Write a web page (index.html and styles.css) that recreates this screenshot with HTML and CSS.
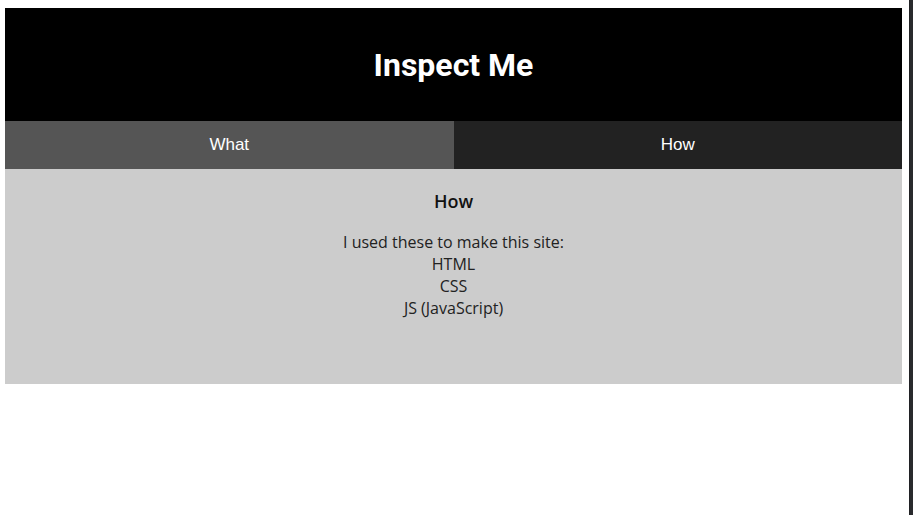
FILE: index.html
```html
<!DOCTYPE html>
<html>
<head>
    <title>Inspect Me</title>
    <link rel="stylesheet" href="styles.css">
</head>
<body>
    <header class="site-header">
        <h1>Inspect Me</h1>
    </header>

    <nav class="tabs">
        <button class="tab tab-what">What</button>
        <button class="tab tab-how">How</button>
    </nav>

    <section class="panel">
        <h2>How</h2>
        <p>
            I used these to make this site:<br>
            HTML<br>
            CSS<br>
            JS (JavaScript)
        </p>
    </section>

    <div class="devtools-edge"></div>
</body>
</html>
```

FILE: styles.css
```css
body {
    margin: 8px 11px 0 5px;
    font-family: "Open Sans", Arial, sans-serif;
    background: #fff;
}
.site-header {
    height: 113px;
    background: #000;
    display: flex;
    align-items: center;
    justify-content: center;
}
.site-header h1 {
    margin: 0;
    font-family: Roboto, Arial, sans-serif;
    font-weight: 700;
    font-size: 32px;
    color: #fff;
}
.tabs {
    display: flex;
}
.tab {
    flex: 1;
    height: 48px;
    border: none;
    padding: 0;
    color: #fff;
    font-family: "Liberation Sans", Arial, sans-serif;
    font-size: 17px;
    cursor: pointer;
}
.tab-what {
    background: #555;
}
.tab-how {
    background: #222;
}
.panel {
    background: #ccc;
    height: 215px;
    box-sizing: border-box;
    padding-top: 20px;
    text-align: center;
    color: #222;
}
.panel h2 {
    margin: 0 0 17px;
    font-size: 18px;
    font-weight: 600;
    line-height: 25px;
    color: #111;
}
.panel p {
    margin: 0;
    font-size: 16px;
    line-height: 22px;
}
.devtools-edge {
    position: fixed;
    top: 0;
    right: 0;
    bottom: 0;
    width: 3px;
    background: #292a2d;
    border-left: 1px solid #202124;
}
```
